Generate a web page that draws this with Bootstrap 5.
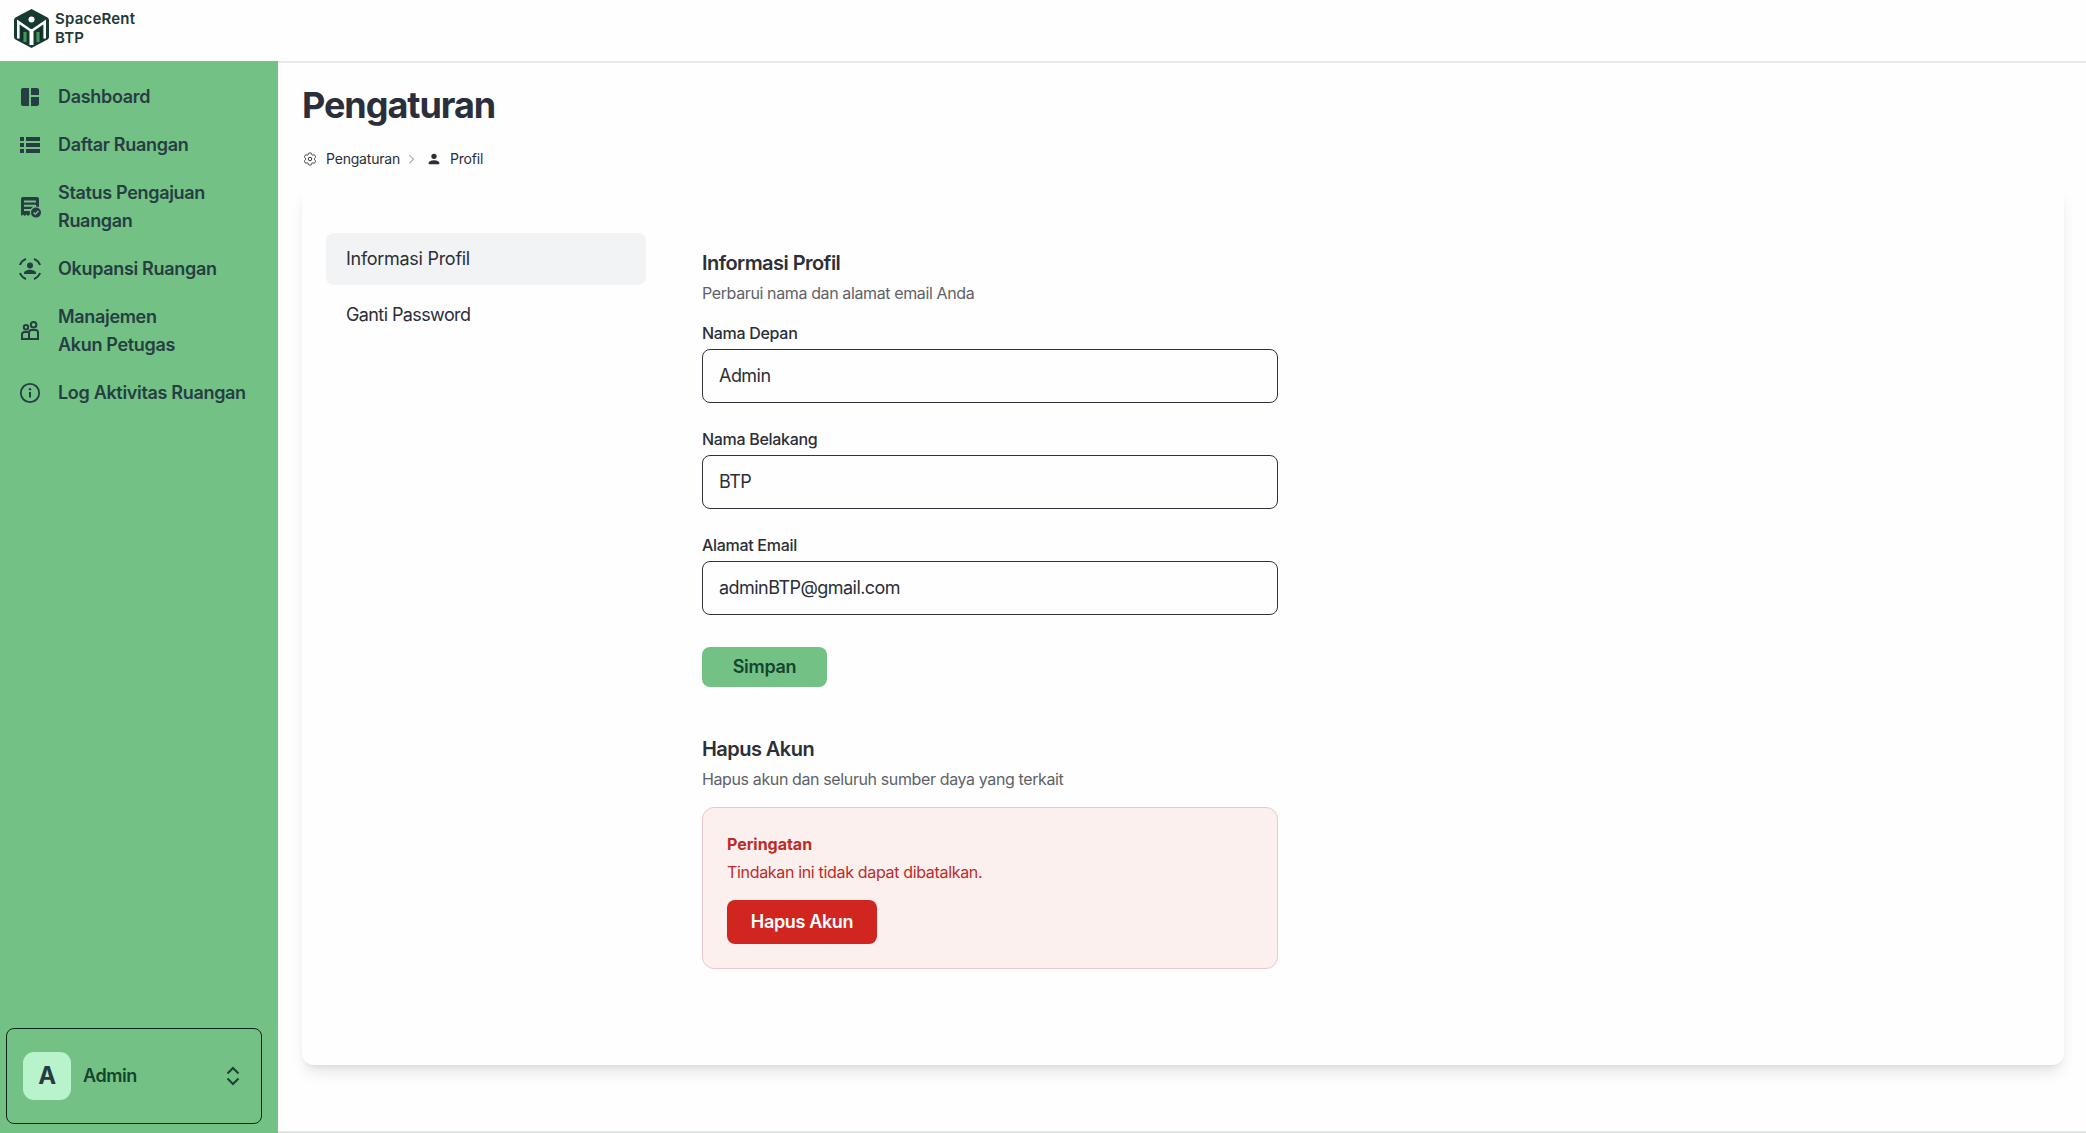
<!DOCTYPE html>
<html lang="id">
<head>
<meta charset="utf-8">
<meta name="viewport" content="width=device-width, initial-scale=1">
<title>Pengaturan - SpaceRent BTP</title>
<link href="https://cdn.jsdelivr.net/npm/bootstrap@5.3.0/dist/css/bootstrap.min.css" rel="stylesheet">
<style>
  body { font-family: Inter, "Liberation Sans", sans-serif; font-size: 18px; line-height: 28px; color: #2b2f38; background: #fefefe; letter-spacing: -.27px; overflow: hidden; }
  .topbar { height: 61px; padding: 8px 0 0 13px; background: #fefefe; }
  .brand-name { font-size: 15px; line-height: 18.5px; font-weight: 600; color: #1f3a38; letter-spacing: .2px; margin: 2px 0 0 5px; }
  .page-wrap { height: 1072px; }
  .side-panel { width: 278px; background: #74c186; color: #253e42; padding: 12px 8px 9px 6px; }
  .side-link { gap: 16px; padding: 10px 0 10px 12px; font-weight: 600; color: inherit; letter-spacing: -.32px; }
  .side-link svg { width: 24px; height: 24px; flex: none; }
  .user-box { width: 256px; height: 96px; border: 1.4px solid #10251a; border-radius: 8px; padding: 0 16px 0 16px; color: #14452f; font-weight: 600; letter-spacing: -.4px; }
  .avatar { width: 48px; height: 48px; border-radius: 11px; background: #b9f3cb; color: #253a45; font-size: 24px; }
  .main-area { padding: 23px 22px 0 24px; border-top: 2px solid #e7e8ea; border-bottom: 2px solid #e1e5e5; }
  .page-title { font-size: 36px; line-height: 40px; font-weight: 700; letter-spacing: -1.05px; color: #2b2f3c; margin: -1px 0 24px; }
  .crumbs { font-size: 14px; line-height: 20px; letter-spacing: -.2px; height: 20px; }
  .crumb-sep { margin: 0 2px; }
  .panel { height: 879px; margin-top: 17px; border-radius: 12px; background: #fefefe; box-shadow: 0 10px 15px -3px rgba(0,0,0,.1), 0 4px 6px -4px rgba(0,0,0,.1); padding: 47px 24px; gap: 56px; }
  .tab-list { width: 320px; gap: 4px; }
  .tab-item { height: 52px; border-radius: 8px; padding: 12px 20px; letter-spacing: -.6px; color: #2b2f38; }
  .tab-item.active { background: #f1f3f5; letter-spacing: -.28px; }
  .form-col { width: 576px; padding-top: 16px; }
  .sec-title { font-size: 20px; line-height: 28px; font-weight: 600; letter-spacing: -.55px; margin: 0; }
  .sec-sub { font-size: 16px; line-height: 24px; letter-spacing: -.38px; color: #5f6268; margin: 4px 0 0; }
  .field-label { font-size: 16px; line-height: 24px; font-weight: 500; letter-spacing: -.3px; margin: 0 0 4px; }
  .field-input { height: 54px; border: 1.3px solid #2f343a; border-radius: 8px; padding: 0 16px 1px; font-size: 18px; letter-spacing: -.54px; color: #2b2f38; background: #fefefe; }
  .btn-save { width: 125px; height: 40px; margin-top: 32px; border-radius: 8px; background: #74c186; color: #14452f; font-size: 18px; font-weight: 600; padding: 0 0 1px; letter-spacing: -.3px; }
  .warn-box { height: 162px; margin-top: 16px; border: 1px solid #ecc8cc; border-radius: 12px; background: #fcf0ef; color: #c02a26; padding: 22px 24px; font-size: 16px; letter-spacing: -.33px; }
  .warn-title { letter-spacing: -.02px; }
  .btn-del { width: 150px; height: 44px; margin-top: 14px; border-radius: 8px; background: #d12620; color: #fff; font-size: 18px; font-weight: 600; padding: 0 0 1px; letter-spacing: -.35px; }
</style>
<script src="https://cdn.jsdelivr.net/npm/bootstrap@5.3.0/dist/js/bootstrap.bundle.min.js"></script>
</head>
<body>
<header class="topbar d-flex align-items-start">
  <svg width="37" height="41" viewBox="0 0 37 41">
    <path d="M18.500 1 L34.500 9.500 Q36 10.500 36 12 V29 Q36 30.500 34.500 31.500 L18.500 40 L2.500 31.500 Q1 30.500 1 29 V12 Q1 10.500 2.500 9.500 Z" fill="#153a32"/>
    <path d="M12 24 V34 M25 24 V34" stroke="#4b9360" stroke-width="3"/>
    <path d="M5.300 30.500 V14 L18.500 23 L31.700 14 V30.500" fill="none" stroke="#fff" stroke-width="2.600"/>
    <path d="M18.500 21 V37" stroke="#fff" stroke-width="4"/>
    <path d="M9 20 V32 M28 20 V32" stroke="#0f2c27" stroke-width="2"/>
    <circle cx="18.500" cy="11.500" r="3" fill="#fff"/>
  </svg>
  <div class="brand-name">SpaceRent<br>BTP</div>
</header>
<div class="page-wrap d-flex">
  <aside class="side-panel d-flex flex-column justify-content-between flex-shrink-0">
    <nav class="d-flex flex-column">
      <a class="side-link d-flex align-items-center text-decoration-none" href="#"><svg viewBox="0 0 24 24" fill="currentColor"><path d="M11 21H5c-1.100 0-2-.9-2-2V5c0-1.100.9-2 2-2h6v18zm2 0h6c1.100 0 2-.9 2-2v-7h-8v9zm8-11V5c0-1.100-.9-2-2-2h-6v7h8z"/></svg><span>Dashboard</span></a>
      <a class="side-link d-flex align-items-center text-decoration-none" href="#"><svg viewBox="0 0 24 24" fill="currentColor"><path d="M2 4h4v4H2zM2 10h4v4H2zM2 16h4v4H2zM8 4h14v4H8zM8 10h14v4H8zM8 16h14v4H8z"/></svg><span>Daftar Ruangan</span></a>
      <a class="side-link d-flex align-items-center text-decoration-none" href="#"><svg viewBox="0 0 24 24" fill="currentColor"><path fill-rule="evenodd" d="M5 2h14a2 2 0 0 1 2 2v8.100a6.200 6.200 0 0 0-3-.6V9.800H6v2h9.200A6 6 0 0 0 12.800 14H6v2h5.900a6 6 0 0 0 .6 4.300l-1-.8-1.500 1.500-1.700-1.500L6.500 21 5 19.500 3 21V4a2 2 0 0 1 2-2zM6 5.500v2h12v-2z"/><path fill-rule="evenodd" d="M18 12.600a5 5 0 1 1 0 10 5 5 0 0 1 0-10zm-.7 7.600 3.700-3.700-1-1-2.700 2.700-1.100-1.100-1 1z"/></svg><span>Status Pengajuan<br>Ruangan</span></a>
      <a class="side-link d-flex align-items-center text-decoration-none" href="#"><svg viewBox="0 0 24 24"><path d="M1.900 8A11 11 0 0 1 8 1.900M16 1.900A11 11 0 0 1 22.100 8M22.100 16a11 11 0 0 1-6.100 6.100M8 22.100A11 11 0 0 1 1.900 16" fill="none" stroke="currentColor" stroke-width="2"/><circle cx="12" cy="8.500" r="3" fill="currentColor"/><path d="M6 17v-1.300c0-2 4-3 6-3s6 1 6 3V17z" fill="currentColor"/></svg><span>Okupansi Ruangan</span></a>
      <a class="side-link d-flex align-items-center text-decoration-none" href="#"><svg viewBox="0 0 24 24" fill="none" stroke="currentColor" stroke-width="2"><circle cx="8" cy="8.300" r="2.200"/><circle cx="15.600" cy="5.800" r="2.800"/><path d="M10 20H4v-4.500A2.500 2.500 0 0 1 6.500 13H10M20 20H11v-6.500a2.500 2.500 0 0 1 2.500-2.500h4a2.500 2.500 0 0 1 2.500 2.500z"/></svg><span>Manajemen<br>Akun Petugas</span></a>
      <a class="side-link d-flex align-items-center text-decoration-none" href="#"><svg viewBox="0 0 24 24"><circle cx="12" cy="12" r="9.200" fill="none" stroke="currentColor" stroke-width="1.800"/><path d="M12 11v5.500" stroke="currentColor" stroke-width="2"/><circle cx="12" cy="8.200" r="1.200" fill="currentColor"/></svg><span>Log Aktivitas Ruangan</span></a>
    </nav>
    <div class="user-box d-flex align-items-center">
      <div class="avatar d-flex align-items-center justify-content-center fw-bold">A</div>
      <span class="ms-2 ps-1 me-auto">Admin</span>
      <svg width="24" height="24" viewBox="0 0 24 24" fill="none" stroke="currentColor" stroke-width="2"><path d="m6.500 9.500 5.500-5.500 5.500 5.500M6.500 14.500l5.500 5.500 5.500-5.500"/></svg>
    </div>
  </aside>
  <main class="main-area flex-grow-1">
    <h1 class="page-title">Pengaturan</h1>
    <div class="crumbs d-flex align-items-center">
      <svg width="16" height="16" viewBox="0 0 24 24" fill="none" stroke="currentColor" stroke-width="1.400" stroke-linejoin="round"><path d="M9.600 3.900c.1-.5.500-.9 1.100-.9h2.600c.6 0 1 .4 1.100.9l.2 1.300c.1.400.3.700.6.900.4.200.8.300 1.200.1l1.200-.5c.5-.2 1.100 0 1.400.5l1.300 2.200c.3.500.2 1.100-.3 1.400l-1 .8c-.3.300-.5.600-.4 1v.8c0 .4.100.7.400 1l1 .8c.4.400.5 1 .3 1.400L19 17.800c-.3.500-.9.700-1.400.5l-1.200-.5c-.4-.1-.8-.1-1.100.1-.4.200-.6.500-.7.900l-.2 1.300c-.1.500-.5.900-1.100.9h-2.600c-.6 0-1-.4-1.100-.9l-.2-1.300c-.1-.4-.3-.7-.6-.9-.4-.2-.8-.2-1.200-.1l-1.200.5c-.5.200-1.100 0-1.400-.5l-1.300-2.200c-.3-.5-.2-1.100.3-1.400l1-.8c.3-.3.400-.6.400-1v-.8c0-.4-.1-.7-.4-1l-1-.8c-.4-.4-.5-1-.3-1.400L5 6.200c.3-.5.900-.7 1.400-.5l1.200.5c.4.100.8.100 1.200-.1.300-.2.500-.5.600-.9z"/><circle cx="12" cy="12" r="2.600"/></svg>
      <span class="ms-2">Pengaturan</span>
      <svg class="crumb-sep" width="18" height="18" viewBox="0 0 16 16" fill="none" stroke="#a9adb2"><path d="m6.500 4.500 3.700 3.700-3.700 3.700"/></svg>
      <svg class="ms-1" width="16" height="16" viewBox="0 0 24 24" fill="currentColor"><path d="M12 12a4 4 0 1 0 0-8 4 4 0 0 0 0 8zm0 2c-2.700 0-8 1.300-8 4v2h16v-2c0-2.700-5.300-4-8-4z"/></svg>
      <span class="ms-2">Profil</span>
    </div>
    <div class="panel d-flex align-items-start">
      <div class="tab-list d-flex flex-column flex-shrink-0">
        <a class="tab-item active text-decoration-none" href="#">Informasi Profil</a>
        <a class="tab-item text-decoration-none" href="#">Ganti Password</a>
      </div>
      <div class="form-col">
        <h2 class="sec-title">Informasi Profil</h2>
        <p class="sec-sub">Perbarui nama dan alamat email Anda</p>
        <form class="mt-3">
          <div class="mb-4"><label class="field-label d-block" for="fn">Nama Depan</label><input id="fn" class="field-input form-control" value="Admin"></div>
          <div class="mb-4"><label class="field-label d-block" for="ln">Nama Belakang</label><input id="ln" class="field-input form-control" value="BTP"></div>
          <div><label class="field-label d-block" for="em">Alamat Email</label><input id="em" class="field-input form-control" value="adminBTP@gmail.com"></div>
          <button type="button" class="btn btn-save border-0">Simpan</button>
        </form>
        <h2 class="sec-title mt-5">Hapus Akun</h2>
        <p class="sec-sub">Hapus akun dan seluruh sumber daya yang terkait</p>
        <div class="warn-box">
          <div class="warn-title fw-bold">Peringatan</div>
          <div>Tindakan ini tidak dapat dibatalkan.</div>
          <button type="button" class="btn btn-del border-0">Hapus Akun</button>
        </div>
      </div>
    </div>
  </main>
</div>
</body>
</html>
